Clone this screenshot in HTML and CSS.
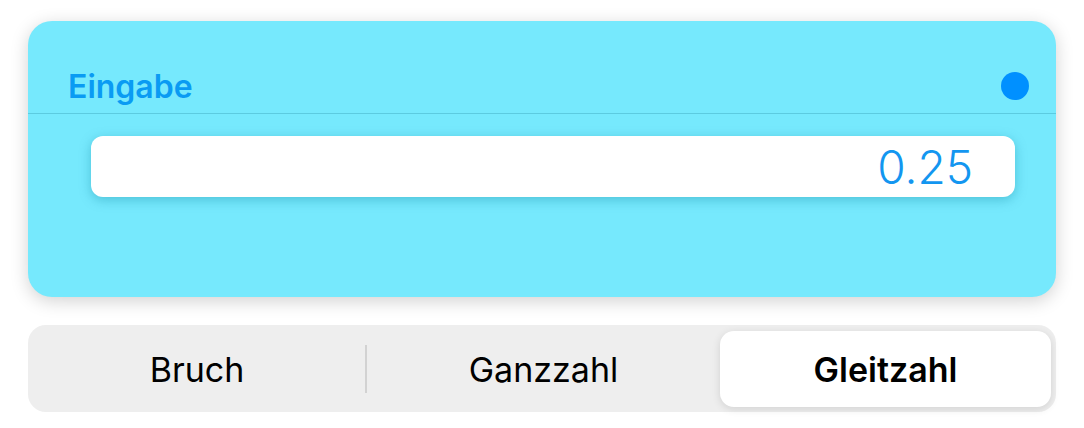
FILE: index.html
```html
<!DOCTYPE html>
<html lang="de">
<head>
<meta charset="utf-8">
<link rel="stylesheet" href="styles.css">
</head>
<body>
<div class="page">
  <section class="card">
    <div class="card-header">
      <span class="title">Eingabe</span>
      <span class="dot"></span>
    </div>
    <div class="input">0.25</div>
  </section>
  <div class="segmented">
    <div class="seg">Bruch</div>
    <div class="sep"></div>
    <div class="seg">Ganzzahl</div>
    <div class="seg selected">Gleitzahl</div>
  </div>
</div>
</body>
</html>
```
FILE: styles.css
```css
html, body {
  margin: 0;
  padding: 0;
  background: #ffffff;
}
body {
  font-family: Inter, "Noto Sans", "Liberation Sans", sans-serif;
  width: 1084px;
  height: 428px;
  overflow: hidden;
}
.page {
  padding: 21px 28px 0 28px;
  display: flex;
  flex-direction: column;
  gap: 28px;
}
.card {
  height: 276px;
  box-sizing: border-box;
  background: #76e9fd;
  border-radius: 24px;
  box-shadow: 0 4px 18px rgba(0, 0, 0, 0.18);
  display: flex;
  flex-direction: column;
}
.card-header {
  height: 93px;
  box-sizing: border-box;
  padding: 38px 27px 0 40px;
  display: flex;
  align-items: center;
  justify-content: space-between;
  border-bottom: 1px solid #5ccbe0;
}
.title {
  color: #0a9bf3;
  font-size: 32px;
  font-weight: 600;
}
.dot {
  width: 28px;
  height: 28px;
  border-radius: 50%;
  background: #0090ff;
}
.input {
  margin: 22px 41px 0 63px;
  height: 61px;
  background: #ffffff;
  border-radius: 12px;
  box-shadow: 0 3px 12px rgba(0, 120, 150, 0.35);
  display: flex;
  align-items: center;
  justify-content: flex-end;
  padding-right: 42px;
  color: #1396f0;
  font-size: 46px;
  font-weight: 300;
}
.segmented {
  height: 87px;
  box-sizing: border-box;
  background: #eeeeee;
  border-radius: 18px;
  padding: 6px 5px 5px 5px;
  display: grid;
  grid-template-columns: 328px 2px 1fr 331px;
  align-items: center;
  column-gap: 4px;
}
.seg {
  height: 76px;
  display: flex;
  align-items: center;
  justify-content: center;
  font-size: 34px;
  font-weight: 400;
  color: #000000;
}
.sep {
  width: 2px;
  height: 48px;
  background: #d2d2d2;
}
.seg.selected {
  background: #ffffff;
  border-radius: 14px;
  font-weight: 600;
  font-size: 34px;
  box-shadow: 0 2px 8px rgba(0, 0, 0, 0.12);
}
```
